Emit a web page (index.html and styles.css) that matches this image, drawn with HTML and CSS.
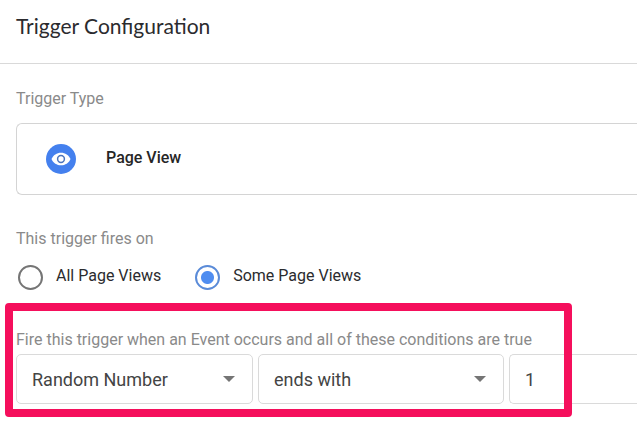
FILE: index.html
```html
<!DOCTYPE html>
<html lang="en">
<head>
    <meta charset="UTF-8">
    <meta name="viewport" content="width=device-width, initial-scale=1.0">
    <title>Trigger Configuration</title>
    <link rel="stylesheet" href="styles.css">
</head>
<body>
    <header class="header">
        <h1>Trigger Configuration</h1>
    </header>
    <main class="content">
        <h2 class="label">Trigger Type</h2>
        <button class="type" type="button">
            <svg class="type-icon" viewBox="0 0 30 30" aria-hidden="true">
                <circle cx="15" cy="15" r="15" fill="#4480ee"/>
                <path d="M5.5 15C7.2 11 10.8 8.7 15 8.7S22.8 11 24.5 15C22.8 19 19.2 21.3 15 21.3S7.2 19 5.5 15Z" fill="#fff"/>
                <circle cx="15" cy="15" r="3.4" fill="#fff" stroke="#4b74bd" stroke-width="1.5"/>
            </svg>
            <span>Page View</span>
        </button>
        <fieldset class="fires">
            <legend class="label">This trigger fires on</legend>
            <div class="options">
                <label class="option"><input type="radio" name="fires"><span>All Page Views</span></label>
                <label class="option"><input type="radio" name="fires" checked><span>Some Page Views</span></label>
            </div>
        </fieldset>
        <fieldset class="conditions">
            <legend class="label">Fire this trigger when an Event occurs and all of these conditions are true</legend>
            <div class="row">
                <div class="select">
                    <select aria-label="Variable">
                        <option>Random Number</option>
                    </select>
                </div>
                <div class="select">
                    <select aria-label="Operator">
                        <option>ends with</option>
                    </select>
                </div>
                <input class="value" type="text" value="1" aria-label="Value">
            </div>
            <div class="highlight"></div>
        </fieldset>
    </main>
</body>
</html>
```

FILE: styles.css
```css
* {
    box-sizing: border-box;
}
body {
    margin: 0;
    background: #fff;
    color: #2b2b2e;
    font-family: Roboto, "Liberation Sans", sans-serif;
    overflow-x: hidden;
}
h1, h2, fieldset, legend {
    margin: 0;
    padding: 0;
    border: 0;
    font-weight: 400;
}
.header {
    padding: 12px 16px 23px;
    border-bottom: 1px solid #d9d9d9;
}
.header h1 {
    font-family: Lato, sans-serif;
    font-size: 21px;
    line-height: 28px;
}
.content {
    padding: 25px 0 22px 16px;
}
.label {
    color: #8a8a8a;
    font-size: 16px;
    line-height: 20px;
}
.type {
    display: flex;
    align-items: center;
    gap: 30px;
    width: 100%;
    height: 72px;
    margin: 14px 0 34px;
    padding: 0 29px;
    border: 1px solid #d4d4d4;
    border-right: 0;
    border-radius: 6px 0 0 6px;
    background: #fff;
    color: #262626;
    font-family: inherit;
    font-size: 16px;
    font-weight: 500;
}
.type-icon {
    width: 30px;
    height: 30px;
}
.type span, .option span {
    padding-bottom: 4px;
}
.options {
    display: flex;
    gap: 34px;
    padding: 16px 2px 0;
}
.option {
    display: flex;
    align-items: center;
    gap: 13px;
    font-size: 16px;
    line-height: 20px;
}
.option input {
    appearance: none;
    width: 25px;
    height: 25px;
    margin: 0;
    border: 2px solid #757575;
    border-radius: 50%;
}
.option input:checked {
    border-color: #5a8bd8;
    background: radial-gradient(circle, #4f8df0 6px, #fff 7px);
}
.conditions {
    position: relative;
    margin-top: 40px;
}
.row {
    display: grid;
    grid-template-columns: 237px 246px 1fr;
    gap: 5px;
    padding-top: 4px;
}
.select {
    display: grid;
    align-items: center;
}
.select select, .select::after {
    grid-area: 1 / 1;
}
.select::after {
    content: "";
    justify-self: end;
    width: 12px;
    height: 6px;
    margin-right: 18px;
    background: #757575;
    clip-path: polygon(0 0, 100% 0, 50% 100%);
    pointer-events: none;
}
.select select, .value {
    appearance: none;
    width: 100%;
    height: 50px;
    padding: 0 15px;
    border: 1px solid #dadada;
    border-radius: 5px;
    background: #fff;
    color: #444;
    font-family: inherit;
    font-size: 18px;
}
.value {
    border-right: 0;
    border-radius: 5px 0 0 5px;
}
/* frame drawn over the condition row */
.highlight {
    position: absolute;
    top: -47px;
    bottom: -13px;
    left: -11px;
    width: 567px;
    border: 8px solid #f50f5c;
    border-radius: 4px;
    pointer-events: none;
}
```
